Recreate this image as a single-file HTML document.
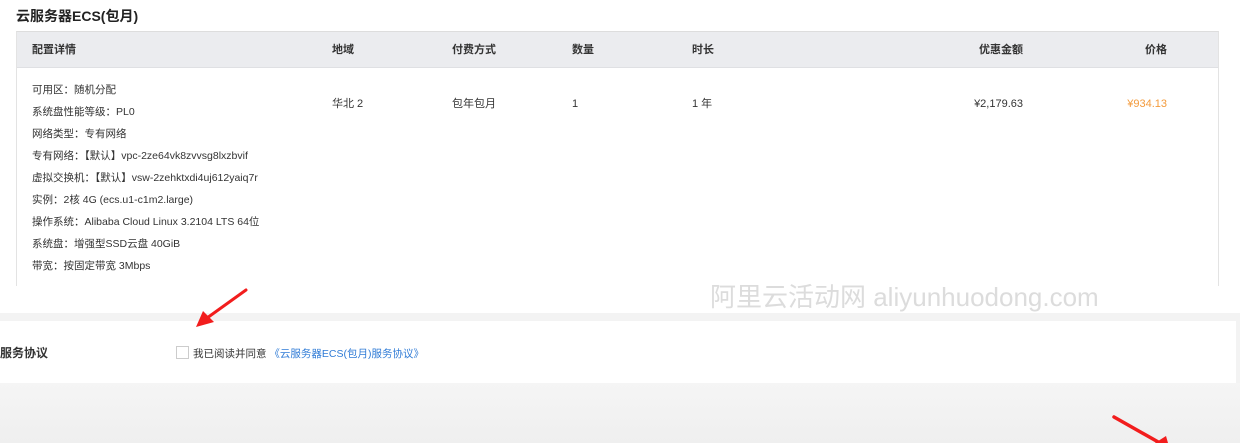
<!DOCTYPE html>
<html><head><meta charset="utf-8"><style>
*{margin:0;padding:0;box-sizing:border-box}
body{width:1240px;height:443px;overflow:hidden;background:#fff;font-family:"Liberation Sans","Noto Sans CJK SC",sans-serif;color:#333;position:relative}
.a{position:absolute;white-space:nowrap;line-height:16px}
.title{left:16px;top:6px;font-size:14px;font-weight:bold;color:#222;line-height:20px}
.tbl{position:absolute;left:16px;top:31px;width:1203px;height:255px;border-left:1px solid #e3e3e3;border-right:1px solid #e3e3e3;border-top:1px solid #ddd}
.hd{position:absolute;left:0;top:0;right:0;height:36px;background:#ebecef;border-bottom:1px solid #dfe0e3}
.h{font-size:11px;font-weight:bold;color:#333;top:42px}
.c{font-size:11px;color:#333;top:96px}
.l{left:32px;font-size:10.5px;color:#333}
</style></head><body>
<div class="a title">云服务器ECS(包月)</div>
<div class="tbl"><div class="hd"></div></div>
<div class="a h" style="left:32px">配置详情</div>
<div class="a h" style="left:332px">地域</div>
<div class="a h" style="left:452px">付费方式</div>
<div class="a h" style="left:572px">数量</div>
<div class="a h" style="left:692px">时长</div>
<div class="a h" style="right:217px">优惠金额</div>
<div class="a h" style="right:73px">价格</div>
<div class="a c" style="left:332px">华北 2</div>
<div class="a c" style="left:452px">包年包月</div>
<div class="a c" style="left:572px">1</div>
<div class="a c" style="left:692px">1 年</div>
<div class="a c" style="right:217px">¥2,179.63</div>
<div class="a c" style="right:73px;color:#f39a3b">¥934.13</div>
<div class="a l" style="top:82px">可用区：随机分配</div>
<div class="a l" style="top:104px">系统盘性能等级：PL0</div>
<div class="a l" style="top:126px">网络类型：专有网络</div>
<div class="a l" style="top:148px">专有网络：【默认】vpc-2ze64vk8zvvsg8lxzbvif</div>
<div class="a l" style="top:170px">虚拟交换机：【默认】vsw-2zehktxdi4uj612yaiq7r</div>
<div class="a l" style="top:192px">实例：2核 4G (ecs.u1-c1m2.large)</div>
<div class="a l" style="top:214px">操作系统：Alibaba Cloud Linux 3.2104 LTS 64位</div>
<div class="a l" style="top:236px">系统盘：增强型SSD云盘 40GiB</div>
<div class="a l" style="top:258px">带宽：按固定带宽 3Mbps</div>
<div class="a" style="left:0;top:313px;width:1240px;height:8px;background:#f3f3f3"></div>
<div class="a" style="left:1236px;top:313px;width:4px;height:130px;background:#f3f3f3"></div>
<div class="a" style="left:0;top:383px;width:1240px;height:60px;background:linear-gradient(#f5f5f5,#efefef)"></div>
<div class="a" style="left:710px;top:282px;font-size:26px;line-height:30px;color:#dcdcdc;z-index:2">阿里云活动网 aliyunhuodong.com</div>
<div class="a" style="left:0;top:345px;font-size:12px;font-weight:bold;color:#333">服务协议</div>
<div class="a" style="left:176px;top:346px;width:13px;height:13px;border:1px solid #ccc;background:#fff"></div>
<div class="a" style="left:193px;top:346px;font-size:10.5px;color:#333">我已阅读并同意 <span style="color:#2f7bd6">《云服务器ECS(包月)服务协议》</span></div>
<svg class="a" style="left:0;top:0;z-index:3" width="1240" height="443">
<path d="M246 290 L207 318" stroke="#f21d1d" stroke-width="3" stroke-linecap="round"/>
<path d="M196 327 L203 311 L214 322 Z" fill="#f21d1d"/>
<path d="M1114 417 L1160 443" stroke="#f21d1d" stroke-width="3.5" stroke-linecap="round"/>
<path d="M1155 443 L1166 436 L1168 443 Z" fill="#f21d1d"/>
</svg>
</body></html>
